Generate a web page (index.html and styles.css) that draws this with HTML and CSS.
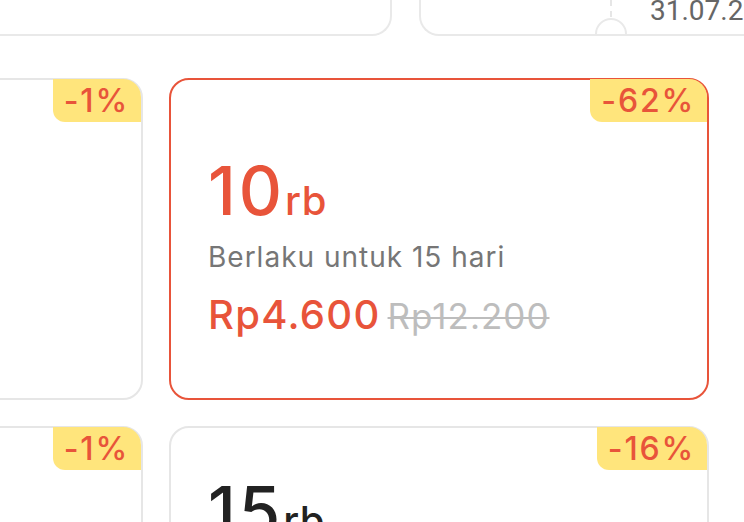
FILE: index.html
```html
<!DOCTYPE html>
<html lang="id">
<head>
<meta charset="utf-8">
<title>Voucher</title>
<link rel="stylesheet" href="styles.css">
</head>
<body>
<div class="page">
  <div class="top-row">
    <div class="ticket ticket-left"></div>
    <div class="ticket ticket-right">
      <span class="dash"></span>
      <span class="notch"></span>
      <span class="date">31.07.2024</span>
    </div>
  </div>
  <div class="grid">
    <div class="card">
      <span class="badge">-1%</span>
    </div>
    <div class="card selected">
      <span class="badge">-62%</span>
      <div class="body body-center">
        <div class="amount">10<span class="unit">rb</span></div>
        <div class="valid">Berlaku untuk 15 hari</div>
        <div class="prices"><span class="price">Rp4.600</span><span class="old">Rp12.200</span></div>
      </div>
    </div>
    <div class="card">
      <span class="badge">-1%</span>
    </div>
    <div class="card">
      <span class="badge">-16%</span>
      <div class="body body-low">
        <div class="amount dark">15<span class="unit">rb</span></div>
        <div class="valid">Berlaku untuk 30 hari</div>
      </div>
    </div>
  </div>
</div>
</body>
</html>
```
FILE: styles.css
```css
html, body {
  margin: 0;
  padding: 0;
  background: #ffffff;
}
body {
  font-family: Inter, "Noto Sans", sans-serif;
  width: 744px;
  height: 522px;
  overflow: hidden;
}
.page {
  width: 744px;
  height: 522px;
  overflow: hidden;
}
.top-row {
  display: flex;
  gap: 27px;
  height: 36px;
}
.ticket {
  box-sizing: border-box;
  height: 36px;
  border: 2px solid #e9e9e9;
  border-top: none;
  background: #fff;
  flex-shrink: 0;
}
.ticket-left {
  width: 394px;
  margin-left: -2px;
  border-radius: 0 0 20px 0;
}
.ticket-right {
  width: 420px;
  border-radius: 0 0 0 20px;
  position: relative;
  overflow: hidden;
  display: flex;
  padding-left: 229px;
}
.dash {
  position: absolute;
  left: 189px;
  top: 0;
  width: 0;
  height: 17px;
  border-left: 2px dashed #e6e6e6;
}
.notch {
  position: absolute;
  left: 174px;
  top: 18px;
  width: 28px;
  height: 28px;
  border: 2px solid #e9e9e9;
  border-radius: 50%;
  background: #fff;
}
.date {
  font-family: Roboto, "Liberation Sans", sans-serif;
  font-size: 28px;
  line-height: 28px;
  margin-top: -3px;
  color: #666666;
  white-space: nowrap;
}
.grid {
  display: grid;
  grid-template-columns: 540px 540px;
  grid-auto-rows: 322px;
  column-gap: 26px;
  row-gap: 26px;
  justify-content: end;
  padding-right: 35px;
  margin-top: 42px;
}
.card {
  box-sizing: border-box;
  position: relative;
  border: 2px solid #e6e6e6;
  border-radius: 20px;
  background: #fff;
  padding-left: 37px;
}
.card.selected {
  border-color: #e8543a;
}
.badge {
  position: absolute;
  top: -1px;
  right: 0;
  height: 43px;
  box-sizing: border-box;
  padding: 0 12px 0 11px;
  background: #ffe57c;
  color: #e8543a;
  font-size: 32px;
  font-weight: 500;
  line-height: 43px;
  letter-spacing: 1.8px;
  border-radius: 0 18px 0 12px;
}
.body {
  display: flex;
  flex-direction: column;
}
.body-center {
  padding-top: 77px;
}
.body-low {
  padding-top: 49px;
}
.amount {
  font-size: 67px;
  line-height: 67px;
  font-weight: 500;
  color: #e8543a;
  letter-spacing: 3px;
}
.amount.dark {
  color: #222222;
}
.unit {
  font-size: 40px;
  line-height: 1;
  margin-left: 0;
  letter-spacing: 0.5px;
}
.valid {
  margin-top: 17px;
  font-size: 28px;
  line-height: 32px;
  color: #767676;
  letter-spacing: 1px;
}
.prices {
  margin-top: 20px;
  display: flex;
  align-items: baseline;
  gap: 7px;
  line-height: 44px;
}
.price {
  font-size: 40px;
  font-weight: 500;
  color: #e8543a;
  letter-spacing: 1.3px;
}
.old {
  font-size: 35px;
  color: #bdbdbd;
  letter-spacing: 1px;
  text-decoration: line-through;
  text-decoration-thickness: 2px;
}
```
